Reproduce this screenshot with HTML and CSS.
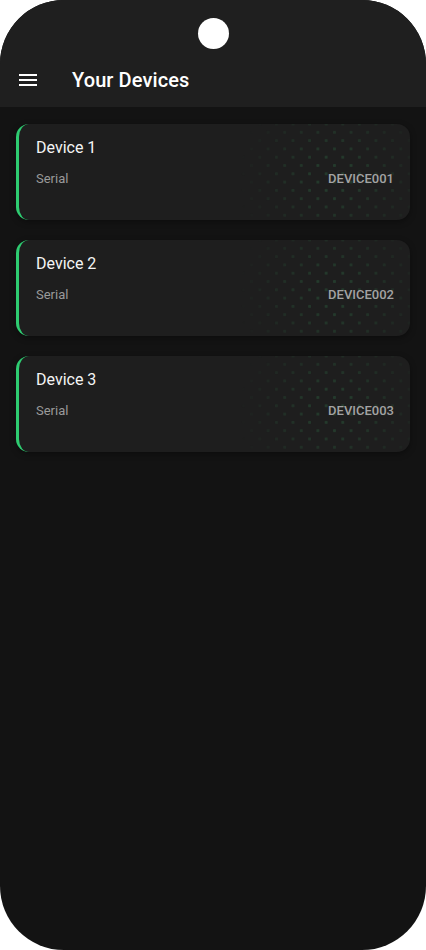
FILE: index.html
```html
<!DOCTYPE html>
<html lang="en">
<head>
<meta charset="utf-8">
<title>Your Devices</title>
<link rel="stylesheet" href="styles.css">
</head>
<body>
<div class="phone">
  <header class="appbar">
    <div class="status"><span class="camera"></span></div>
    <div class="toolbar">
      <svg class="menu" width="24" height="24" viewBox="0 0 24 24" aria-hidden="true">
        <path d="M3 18h18v-2H3v2zm0-5h18v-2H3v2zm0-7v2h18V6H3z" fill="#ffffff"/>
      </svg>
      <h1 class="title">Your Devices</h1>
    </div>
  </header>
  <main class="content">
    <div class="card">
      <div class="card-title">Device 1</div>
      <div class="card-row"><span class="label">Serial</span><span class="value">DEVICE001</span></div>
    </div>
    <div class="card">
      <div class="card-title">Device 2</div>
      <div class="card-row"><span class="label">Serial</span><span class="value">DEVICE002</span></div>
    </div>
    <div class="card">
      <div class="card-title">Device 3</div>
      <div class="card-row"><span class="label">Serial</span><span class="value">DEVICE003</span></div>
    </div>
  </main>
</div>
</body>
</html>
```
FILE: styles.css
```css
* { box-sizing: border-box; }
html, body { margin: 0; padding: 0; background: #ffffff; }
body { font-family: Roboto, "Noto Sans", "Liberation Sans", sans-serif; }

.phone {
  width: 426px;
  height: 950px;
  border-radius: 64px;
  overflow: hidden;
  background: #131313;
  display: flex;
  flex-direction: column;
}

.appbar { background: #1f1f1f; }
.status {
  height: 52px;
  display: flex;
  justify-content: center;
  padding-top: 18px;
}
.camera {
  width: 31px;
  height: 31px;
  border-radius: 50%;
  background: #ffffff;
}
.toolbar {
  height: 55px;
  display: flex;
  align-items: center;
  padding-left: 16px;
  padding-top: 1px;
  gap: 32px;
}
.menu { display: block; flex: none; }
.title {
  margin: 0;
  font-size: 20px;
  font-weight: 500;
  color: #ffffff;
  letter-spacing: 0.1px;
}

.content {
  padding: 17px 16px;
  display: flex;
  flex-direction: column;
  gap: 20px;
}

.card {
  position: relative;
  overflow: hidden;
  height: 96px;
  background: #1e1e1e;
  border-radius: 13px;
  border-left: 3px solid #2ecc71;
  padding: 12px 16px 0 17px;
  box-shadow: 0 2px 6px rgba(0,0,0,0.35);
}
.card::before {
  content: "";
  position: absolute;
  top: 0;
  bottom: 0;
  right: 0;
  width: 200px;
  background-image:
    radial-gradient(circle, rgba(60,170,100,0.2) 1.3px, transparent 1.9px),
    radial-gradient(circle, rgba(60,170,100,0.2) 1.3px, transparent 1.9px);
  background-size: 16.6px 16.6px, 16.6px 16.6px;
  background-position: 0 0, 8.3px 8.3px;
  -webkit-mask-image: radial-gradient(circle at 62% 55%, #000 15%, transparent 72%);
  mask-image: radial-gradient(circle at 62% 55%, #000 15%, transparent 72%);
}
.card-title {
  position: relative;
  font-size: 16px;
  line-height: 24px;
  color: #f4f4f4;
}
.card-row {
  position: relative;
  margin-top: 9px;
  display: flex;
  justify-content: space-between;
  align-items: center;
  line-height: 20px;
  font-size: 13px;
}
.label { color: #9a9a9a; }
.value { color: #a3a3a3; font-weight: 500; }
```
